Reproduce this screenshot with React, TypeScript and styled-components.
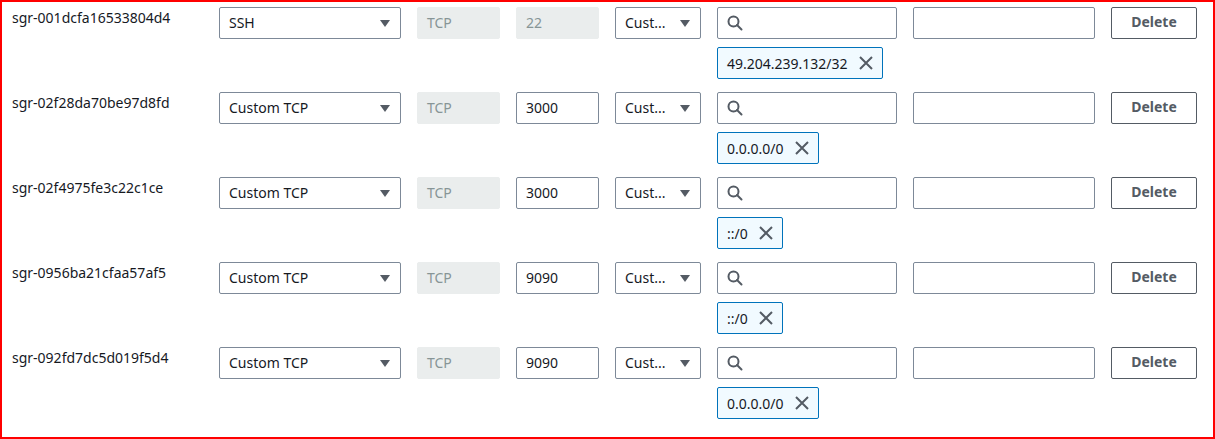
import React from "react";
import styled, { createGlobalStyle } from "styled-components";

const Global = createGlobalStyle`
  html, body { margin: 0; padding: 0; background: #ffffff; }
  * { box-sizing: border-box; }
`;

const Frame = styled.div`
  width: 1215px;
  height: 439px;
  border: 2px solid #ff0000;
  padding: 5px 16px 0 10px;
  font-family: "Noto Sans", "Open Sans", sans-serif;
  font-size: 14px;
  color: #16191f;
  display: flex;
  flex-direction: column;
  gap: 13px;
`;

const Row = styled.div`
  display: grid;
  grid-template-columns: 191px 182px 83px 83px 86px 180px 182px 86px;
  column-gap: 16px;
  row-gap: 8px;
  align-items: start;
`;

const IdCell = styled.div`
  line-height: 20px;
  padding-top: 1px;
  white-space: nowrap;
  grid-row: span 2;
`;

const Field = styled.div<{ $disabled?: boolean }>`
  height: 32px;
  border: 1px solid ${(p) => (p.$disabled ? "#eaeded" : "#7d8998")};
  background: ${(p) => (p.$disabled ? "#eaeded" : "#ffffff")};
  color: ${(p) => (p.$disabled ? "#879596" : "#16191f")};
  border-radius: 2px;
  display: flex;
  align-items: center;
  padding: 0 9px;
  line-height: 20px;
  white-space: nowrap;
  overflow: hidden;
`;

const SelectBox = styled(Field)`
  justify-content: space-between;
  padding-right: 10px;
`;

const Caret = styled.span`
  width: 0;
  height: 0;
  border-left: 5px solid transparent;
  border-right: 5px solid transparent;
  border-top: 7px solid #545b64;
  flex: none;
`;

const SearchBox = styled(Field)`
  gap: 8px;
`;

const DeleteButton = styled.button`
  height: 32px;
  border: 1px solid #545b64;
  border-radius: 2px;
  background: #ffffff;
  color: #545b64;
  font-family: "Noto Sans", "Open Sans", sans-serif;
  font-weight: 700;
  font-size: 14px;
  line-height: 20px;
  padding: 0 0 2px;
  display: flex;
  align-items: center;
  justify-content: center;
  cursor: pointer;
`;

const TokenWrap = styled.div`
  grid-column: 6 / span 2;
  display: flex;
`;

const Token = styled.div`
  height: 32px;
  border: 1px solid #0073bb;
  border-radius: 2px;
  background: #f1faff;
  display: flex;
  align-items: center;
  padding: 0 8px 0 9px;
  gap: 10px;
  white-space: nowrap;
`;

const SearchIcon = () => (
  <svg width="16" height="16" viewBox="0 0 16 16" fill="none">
    <circle cx="6.5" cy="6.5" r="5" stroke="#545b64" strokeWidth="2" />
    <path d="M10 10l4.5 4.5" stroke="#545b64" strokeWidth="2" strokeLinecap="round" />
  </svg>
);

const CloseIcon = () => (
  <svg width="16" height="16" viewBox="0 0 16 16" fill="none">
    <path d="M2 2l12 12M14 2L2 14" stroke="#545b64" strokeWidth="2" />
  </svg>
);

type Rule = { id: string; type: string; port: string; cidr: string };

const rules: Rule[] = [
  { id: "sgr-001dcfa16533804d4", type: "SSH", port: "22", cidr: "49.204.239.132/32" },
  { id: "sgr-02f28da70be97d8fd", type: "Custom TCP", port: "3000", cidr: "0.0.0.0/0" },
  { id: "sgr-02f4975fe3c22c1ce", type: "Custom TCP", port: "3000", cidr: "::/0" },
  { id: "sgr-0956ba21cfaa57af5", type: "Custom TCP", port: "9090", cidr: "::/0" },
  { id: "sgr-092fd7dc5d019f5d4", type: "Custom TCP", port: "9090", cidr: "0.0.0.0/0" },
];

export default function App() {
  return (
    <>
      <Global />
      <Frame>
        {rules.map((r) => (
          <Row key={r.id}>
            <IdCell>{r.id}</IdCell>
            <SelectBox>
              <span>{r.type}</span>
              <Caret />
            </SelectBox>
            <Field $disabled>TCP</Field>
            <Field $disabled={r.type === "SSH"}>{r.port}</Field>
            <SelectBox>
              <span>Cust...</span>
              <Caret />
            </SelectBox>
            <SearchBox>
              <SearchIcon />
            </SearchBox>
            <Field />
            <DeleteButton>Delete</DeleteButton>
            <TokenWrap>
              <Token>
                <span>{r.cidr}</span>
                <CloseIcon />
              </Token>
            </TokenWrap>
          </Row>
        ))}
      </Frame>
    </>
  );
}
